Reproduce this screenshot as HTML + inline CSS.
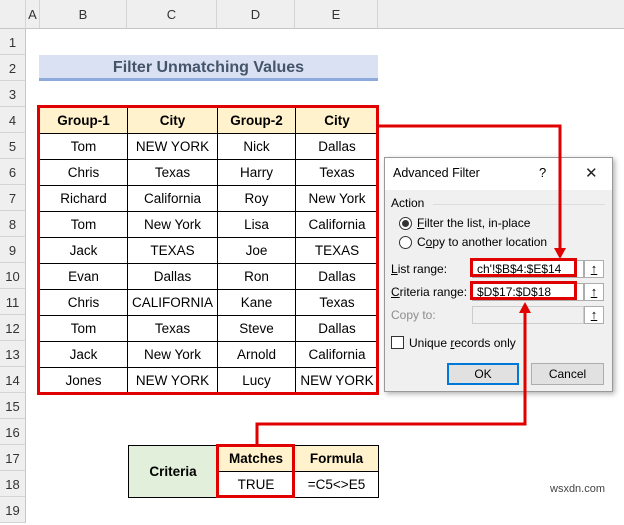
<!DOCTYPE html>
<html><head><style>
*{margin:0;padding:0;box-sizing:border-box}
body{width:624px;height:508px;overflow:hidden;background:#fff;font-family:"Liberation Sans",sans-serif;position:relative;font-size:13px;color:#000}
.a{position:absolute}
.ch{position:absolute;top:0;height:29px;background:#efefef;border-right:1px solid #d4d4d4;border-bottom:1px solid #c6c6c6;text-align:center;line-height:29px;font-size:13px;color:#333}
.rh{position:absolute;left:0;width:26px;height:26px;background:#efefef;border-bottom:1px solid #d4d4d4;border-right:1px solid #c6c6c6;text-align:center;line-height:28px;font-size:13px;color:#333}
.c{position:absolute;height:26px;line-height:26px;text-align:center;border-right:1px solid #000;border-bottom:1px solid #000;font-size:13.5px}
.h{background:#fff2cc;font-weight:bold}
.dl{position:absolute;font-size:12px;color:#000}
.inp{position:absolute;height:18px;border:1px solid #adadad;background:#fff}
.btn{position:absolute;width:20px;height:18px;border:1px solid #adadad;background:#fff;text-align:center;font-size:13px;line-height:15px;font-weight:bold;text-decoration:underline}
</style></head><body>
<div class="ch" style="left:0;width:26px"></div>
<div class="ch" style="left:26px;width:14px">A</div>
<div class="ch" style="left:40px;width:87px">B</div>
<div class="ch" style="left:127px;width:90px">C</div>
<div class="ch" style="left:217px;width:78px">D</div>
<div class="ch" style="left:295px;width:83px">E</div>
<div class="ch" style="left:378px;width:246px;border-right:none"></div>
<div class="rh" style="top:29px">1</div><div class="rh" style="top:55px">2</div><div class="rh" style="top:81px">3</div><div class="rh" style="top:107px">4</div><div class="rh" style="top:133px">5</div><div class="rh" style="top:159px">6</div><div class="rh" style="top:185px">7</div><div class="rh" style="top:211px">8</div><div class="rh" style="top:237px">9</div><div class="rh" style="top:263px">10</div><div class="rh" style="top:289px">11</div><div class="rh" style="top:315px">12</div><div class="rh" style="top:341px">13</div><div class="rh" style="top:367px">14</div><div class="rh" style="top:393px">15</div><div class="rh" style="top:419px">16</div><div class="rh" style="top:445px">17</div><div class="rh" style="top:471px">18</div><div class="rh" style="top:497px">19</div>

<div class="a" style="left:39px;top:55px;width:339px;height:26px;background:#d9e1f2;border-bottom:3px solid #8ea9db;text-align:center;line-height:25px;font-weight:bold;font-size:16px;color:#44546a">Filter Unmatching Values</div>

<div class="a" style="left:39px;top:107px;width:339px;height:287px;border-left:1px solid #000;border-top:1px solid #000">
<div class="c h" style="left:0;top:0;width:88px">Group-1</div><div class="c h" style="left:88px;top:0;width:90px">City</div><div class="c h" style="left:178px;top:0;width:78px">Group-2</div><div class="c h" style="left:256px;top:0;width:83px">City</div>
<div class="c" style="left:0;top:26px;width:88px">Tom</div><div class="c" style="left:88px;top:26px;width:90px">NEW YORK</div><div class="c" style="left:178px;top:26px;width:78px">Nick</div><div class="c" style="left:256px;top:26px;width:83px">Dallas</div>
<div class="c" style="left:0;top:52px;width:88px">Chris</div><div class="c" style="left:88px;top:52px;width:90px">Texas</div><div class="c" style="left:178px;top:52px;width:78px">Harry</div><div class="c" style="left:256px;top:52px;width:83px">Texas</div>
<div class="c" style="left:0;top:78px;width:88px">Richard</div><div class="c" style="left:88px;top:78px;width:90px">California</div><div class="c" style="left:178px;top:78px;width:78px">Roy</div><div class="c" style="left:256px;top:78px;width:83px">New York</div>
<div class="c" style="left:0;top:104px;width:88px">Tom</div><div class="c" style="left:88px;top:104px;width:90px">New York</div><div class="c" style="left:178px;top:104px;width:78px">Lisa</div><div class="c" style="left:256px;top:104px;width:83px">California</div>
<div class="c" style="left:0;top:130px;width:88px">Jack</div><div class="c" style="left:88px;top:130px;width:90px">TEXAS</div><div class="c" style="left:178px;top:130px;width:78px">Joe</div><div class="c" style="left:256px;top:130px;width:83px">TEXAS</div>
<div class="c" style="left:0;top:156px;width:88px">Evan</div><div class="c" style="left:88px;top:156px;width:90px">Dallas</div><div class="c" style="left:178px;top:156px;width:78px">Ron</div><div class="c" style="left:256px;top:156px;width:83px">Dallas</div>
<div class="c" style="left:0;top:182px;width:88px">Chris</div><div class="c" style="left:88px;top:182px;width:90px">CALIFORNIA</div><div class="c" style="left:178px;top:182px;width:78px">Kane</div><div class="c" style="left:256px;top:182px;width:83px">Texas</div>
<div class="c" style="left:0;top:208px;width:88px">Tom</div><div class="c" style="left:88px;top:208px;width:90px">Texas</div><div class="c" style="left:178px;top:208px;width:78px">Steve</div><div class="c" style="left:256px;top:208px;width:83px">Dallas</div>
<div class="c" style="left:0;top:234px;width:88px">Jack</div><div class="c" style="left:88px;top:234px;width:90px">New York</div><div class="c" style="left:178px;top:234px;width:78px">Arnold</div><div class="c" style="left:256px;top:234px;width:83px">California</div>
<div class="c" style="left:0;top:260px;width:88px">Jones</div><div class="c" style="left:88px;top:260px;width:90px">NEW YORK</div><div class="c" style="left:178px;top:260px;width:78px">Lucy</div><div class="c" style="left:256px;top:260px;width:83px">NEW YORK</div>
</div>
<div class="a" style="left:37px;top:105px;width:342px;height:290px;border:3px solid #e00000"></div>

<div class="a" style="left:128px;top:445px;width:251px;height:53px;border-left:1px solid #000;border-top:1px solid #000">
<div class="c" style="left:0;top:0;width:89px;height:52px;line-height:52px;background:#e2efda;font-weight:bold">Criteria</div>
<div class="c h" style="left:89px;top:0;width:77px">Matches</div><div class="c h" style="left:166px;top:0;width:84px">Formula</div>
<div class="c" style="left:89px;top:26px;width:77px">TRUE</div><div class="c" style="left:166px;top:26px;width:84px">=C5&lt;&gt;E5</div>
</div>
<div class="a" style="left:216px;top:444px;width:79px;height:54px;border:3px solid #e00000"></div>
<div class="a" style="left:550px;top:483px;font-size:11px;color:#444">wsxdn.com</div>

<div class="a" style="left:384px;top:157px;width:229px;height:235px;background:#f0f0f0;border:1px solid #999;box-shadow:2px 2px 5px rgba(0,0,0,.3)">
<div class="a" style="left:0;top:0;width:227px;height:32px;background:#fff"></div>
<div class="dl" style="left:8px;top:8px;font-size:12.5px">Advanced Filter</div>
<div class="dl" style="left:154px;top:7px;font-size:13px">?</div>
<div class="dl" style="left:200px;top:6px;font-size:15px;font-weight:normal;color:#222">✕</div>
<div class="dl" style="left:6px;top:38px">Action</div>
<div class="a" style="left:48px;top:46px;width:172px;height:1px;background:#dcdcdc"></div>
<div class="a" style="left:14px;top:59px;width:13px;height:13px;border:1px solid #333;border-radius:50%;background:#fff"><div class="a" style="left:2px;top:2px;width:7px;height:7px;border-radius:50%;background:#333"></div></div>
<div class="dl" style="left:32px;top:58px"><u>F</u>ilter the list, in-place</div>
<div class="a" style="left:14px;top:78px;width:13px;height:13px;border:1px solid #333;border-radius:50%;background:#fff"></div>
<div class="dl" style="left:32px;top:77px">C<u>o</u>py to another location</div>
<div class="dl" style="left:6px;top:104px"><u>L</u>ist range:</div>
<div class="inp" style="left:87px;top:102px;width:112px"></div><div class="dl" style="left:92px;top:104px">ch'!$B$4:$E$14</div>
<div class="btn" style="left:199px;top:102px">↑</div>
<div class="dl" style="left:6px;top:127px"><u>C</u>riteria range:</div>
<div class="inp" style="left:87px;top:125px;width:112px"></div><div class="dl" style="left:92px;top:127px">$D$17:$D$18</div>
<div class="btn" style="left:199px;top:125px">↑</div>
<div class="dl" style="left:6px;top:150px;color:#8d8d8d">Copy to:</div>
<div class="inp" style="left:87px;top:148px;width:112px;background:#f0f0f0;border-color:#ccc"></div>
<div class="btn" style="left:199px;top:148px">↑</div>
<div class="a" style="left:6px;top:178px;width:13px;height:13px;border:1px solid #333;background:#fff"></div>
<div class="dl" style="left:24px;top:178px">Unique <u>r</u>ecords only</div>
<div class="a" style="left:62px;top:205px;width:72px;height:22px;border:2px solid #0078d7;background:#e1e1e1;text-align:center;line-height:18px;font-size:12px">OK</div>
<div class="a" style="left:146px;top:205px;width:73px;height:22px;border:1px solid #adadad;background:#e1e1e1;text-align:center;line-height:20px;font-size:12px">Cancel</div>
</div>
<div class="a" style="left:470px;top:258px;width:107px;height:19px;border:3px solid #e00000"></div>
<div class="a" style="left:470px;top:281px;width:107px;height:19px;border:3px solid #e00000"></div>

<svg class="a" style="left:0;top:0" width="624" height="508">
<polyline points="378,126 560,126 560,252" fill="none" stroke="#e00000" stroke-width="3"/>
<polygon points="554,248 566,248 560,259" fill="#e00000"/>
<polyline points="257,444 257,424 525,424 525,310" fill="none" stroke="#e00000" stroke-width="3"/>
<polygon points="519,313 531,313 525,302" fill="#e00000"/>
</svg>
</body></html>
